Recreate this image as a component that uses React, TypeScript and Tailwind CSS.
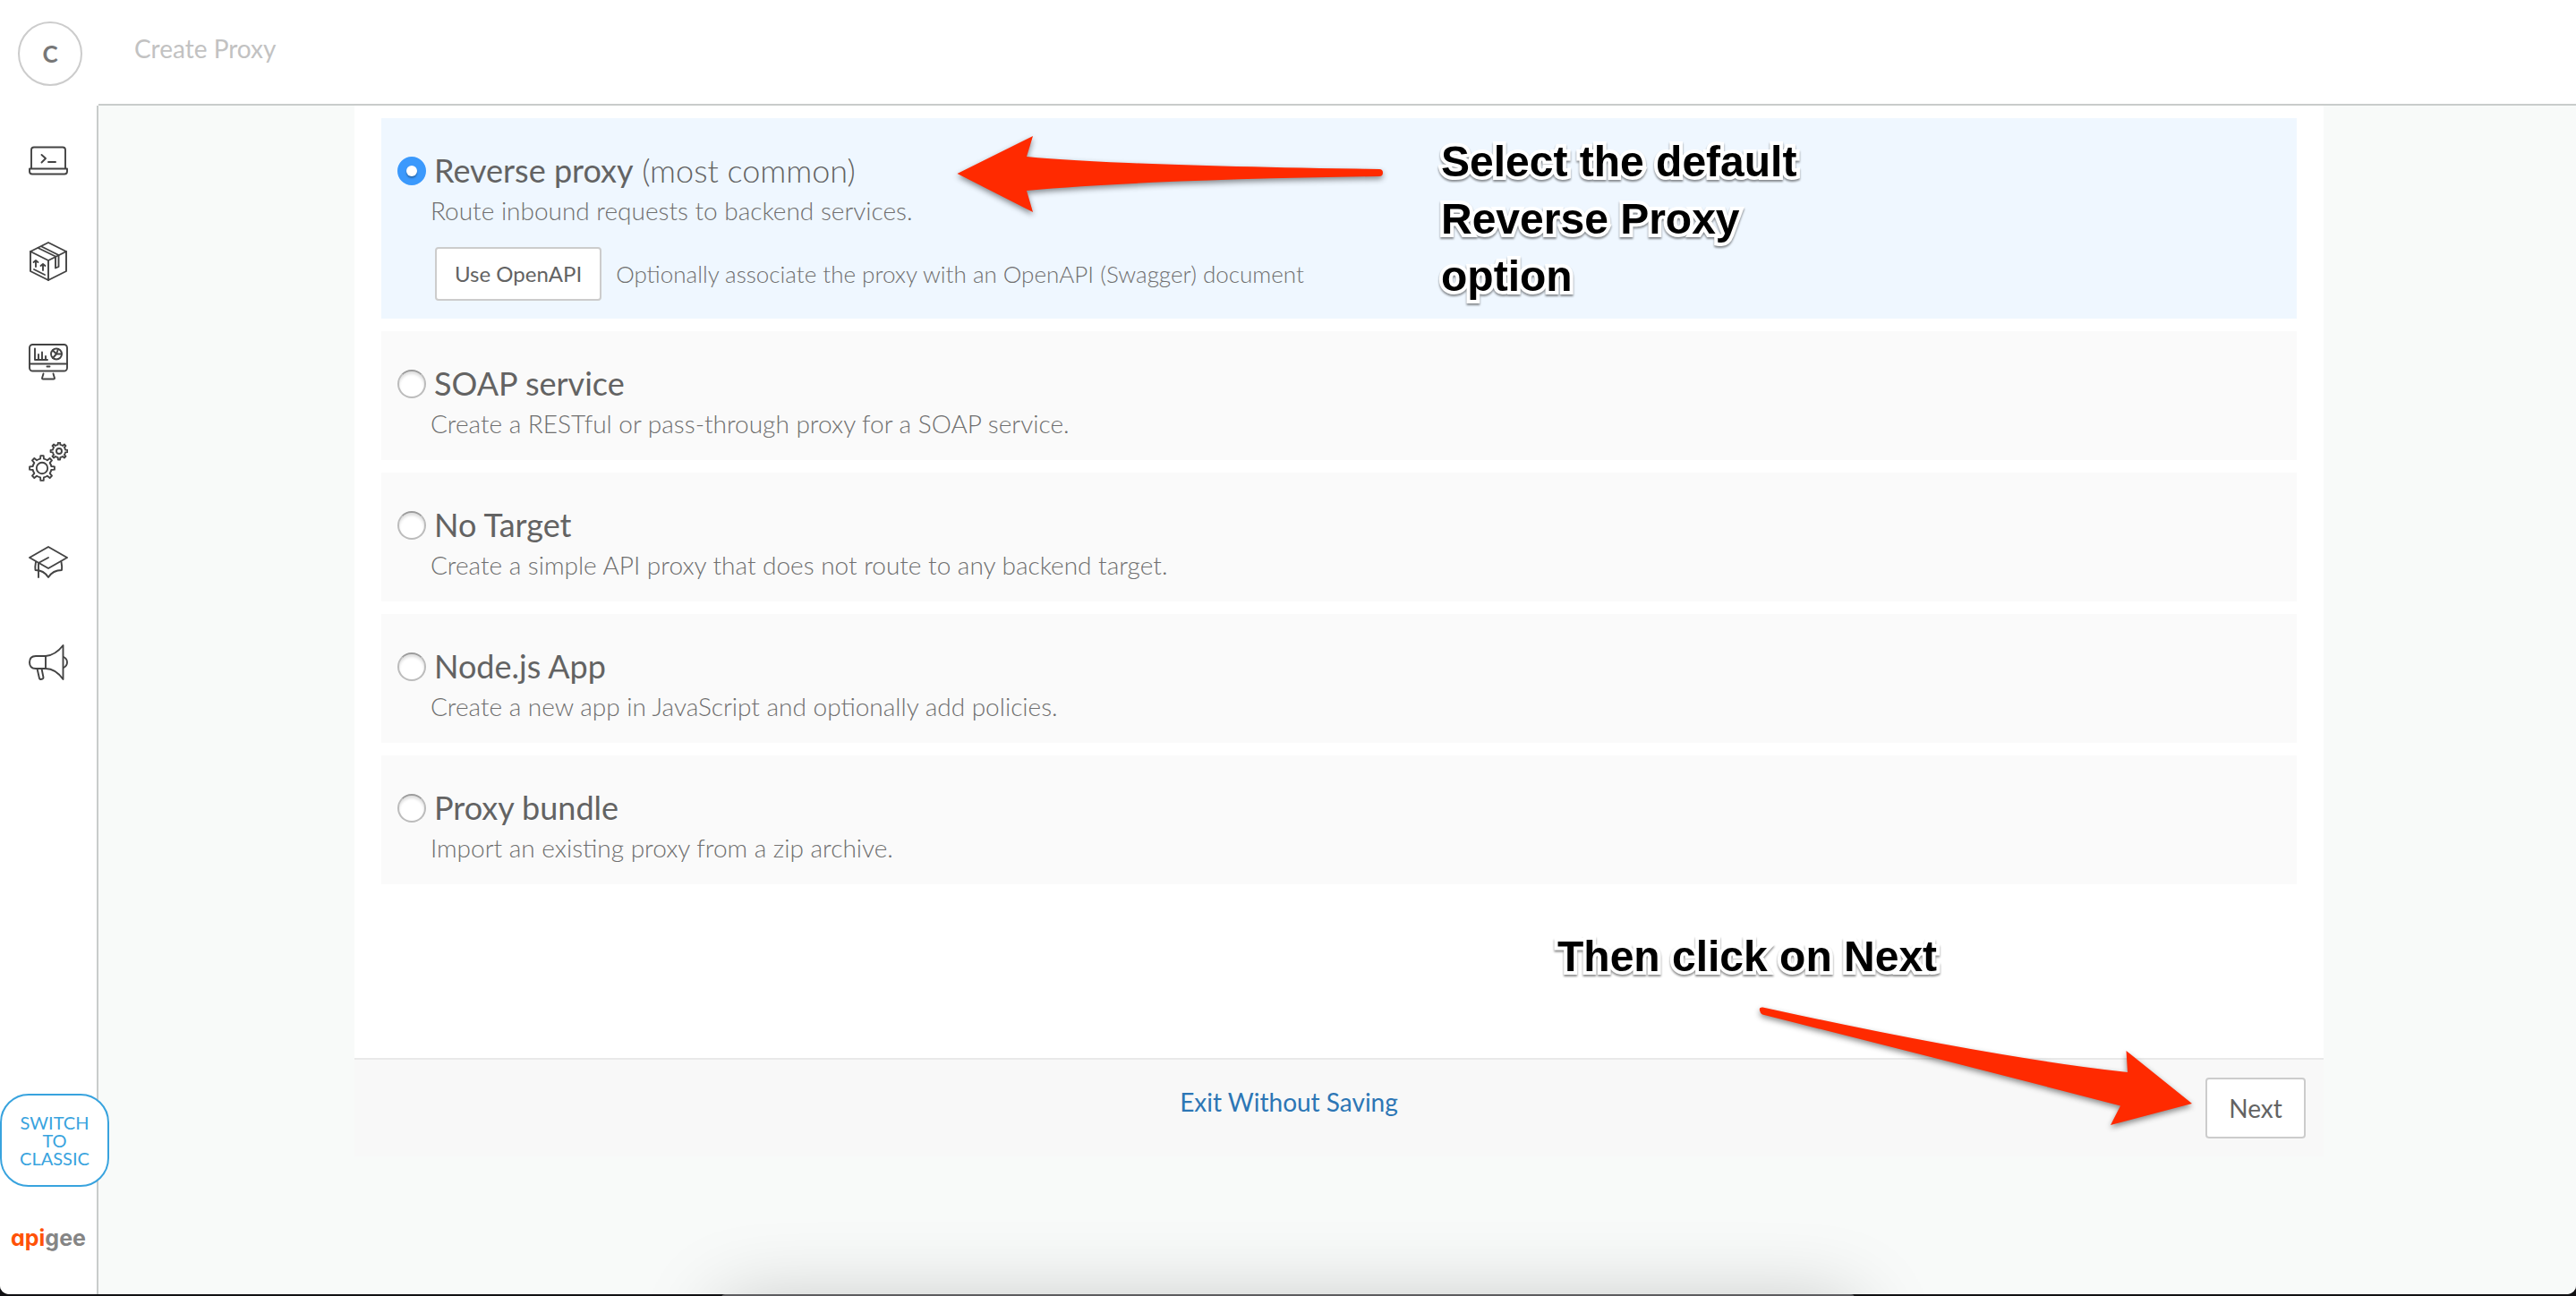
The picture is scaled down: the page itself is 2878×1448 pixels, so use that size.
import React, { useState } from "react";

type ProxyOption = {
  id: string;
  title: string;
  hint?: string;
  description: string;
  openApi?: boolean;
};

const options: ProxyOption[] = [
  {
    id: "reverse",
    title: "Reverse proxy",
    hint: "(most common)",
    description: "Route inbound requests to backend services.",
    openApi: true,
  },
  {
    id: "soap",
    title: "SOAP service",
    description: "Create a RESTful or pass-through proxy for a SOAP service.",
  },
  {
    id: "no-target",
    title: "No Target",
    description: "Create a simple API proxy that does not route to any backend target.",
  },
  {
    id: "node",
    title: "Node.js App",
    description: "Create a new app in JavaScript and optionally add policies.",
  },
  {
    id: "bundle",
    title: "Proxy bundle",
    description: "Import an existing proxy from a zip archive.",
  },
];

function Icon({ children }: { children: React.ReactNode }) {
  return (
    <svg
      viewBox="0 0 44 44"
      className="size-11"
      fill="none"
      stroke="#434343"
      strokeWidth="1.9"
      strokeLinecap="round"
      strokeLinejoin="round"
      aria-hidden="true"
    >
      {children}
    </svg>
  );
}

function gearPath(cx: number, cy: number, outer: number, inner: number, teeth: number) {
  const step = (Math.PI * 2) / teeth;
  const at = (r: number, a: number) =>
    `${(cx + r * Math.sin(a)).toFixed(2)} ${(cy - r * Math.cos(a)).toFixed(2)}`;
  let d = "";
  for (let i = 0; i < teeth; i++) {
    const a = i * step;
    d += `${i === 0 ? "M" : "L"}${at(inner, a - step * 0.24)}L${at(outer, a - step * 0.15)}L${at(
      outer,
      a + step * 0.15
    )}L${at(inner, a + step * 0.24)}A${inner} ${inner} 0 0 1 ${at(inner, a + step * 0.76)}`;
  }
  return d + "Z";
}

const navItems = [
  {
    label: "Develop",
    icon: (
      <Icon>
        <path d="M3 30V9.5Q3 6.5 6 6.5H38Q41 6.5 41 9.5V30" />
        <path d="M1 30.500H43V33.500Q43 36.500 40 36.500H4Q1 36.500 1 33.500Z" />
        <path d="M14.500 15L19 19L14.500 23.500M22 23H30" />
      </Icon>
    ),
  },
  {
    label: "Publish",
    icon: (
      <Icon>
        <path d="M22 1L42 11V33L22 43L2 33V11Z" />
        <path d="M2 11L22 21L42 11M22 21V43" />
        <path d="M10.500 7L30 16.500V29.500L33.500 28V15L14.500 5.500" />
        <path d="M8 28V21M5.500 23L8 21L10.500 23M16 32V25M13.500 27L16 25L18.500 27M6 31L18 37" />
      </Icon>
    ),
  },
  {
    label: "Analyze",
    icon: (
      <Icon>
        <rect x="1" y="3" width="42" height="29.500" rx="3.500" />
        <path d="M1 24.500H43M20.500 27.500H23.500" />
        <path d="M7 7.500V20H21M11 20V14M15 20V11.500M19 20V16" />
        <circle cx="31" cy="13.500" r="6" />
        <path d="M31 13.500L33 8M31 13.500H37M31 13.500L27 18M31 13.500L27 9.500" />
        <path d="M16.500 35.500L15 40.500Q15 41.500 16 41.500H28Q29 41.500 29 40.500L27.500 35.500" />
      </Icon>
    ),
  },
  {
    label: "Admin",
    icon: (
      <Icon>
        <path d={gearPath(15, 29, 14, 10.5, 8)} />
        <circle cx="15" cy="29" r="6.200" />
        <path d={gearPath(34, 10, 9.5, 7.2, 8)} />
        <circle cx="34" cy="10" r="3" />
      </Icon>
    ),
  },
  {
    label: "Learn",
    icon: (
      <Icon>
        <path d="M22 5L43 17L22 29L1 17Z" />
        <path d="M22 17L11 23V39" />
        <path d="M8 22Q7 27 7.500 31Q17 31 22 39Q27 31 37 31Q37.500 27 36.500 22" />
      </Icon>
    ),
  },
  {
    label: "Announcements",
    icon: (
      <Icon>
        <path d="M19 15H8Q1 15 1 22Q1 29 8 29H19Z" />
        <path d="M19 15Q30 14 38.500 3V41Q30 29 19 29" />
        <path d="M39 16Q43 18 43 22Q43 26 39 28" />
        <path d="M9.500 29L12 40Q12.500 41 13.500 41L15.500 40.500Q16.500 40 16.500 39L14.500 29" />
      </Icon>
    ),
  },
];

function Sidebar() {
  return (
    <aside className="flex w-[110px] shrink-0 flex-col bg-white">
      <div className="flex h-[118px] shrink-0 items-start pt-6 pl-5">
        <button
          aria-label="Account"
          className="flex size-18 items-center justify-center rounded-full border-2 border-[#cccccc] text-[26px] font-bold text-[#777777]"
        >
          C
        </button>
      </div>
      <div className="flex grow flex-col border-r-2 border-[#c9cccb]">
        <nav className="flex flex-col items-center gap-17 pt-10">
          {navItems.map((item) => (
            <a key={item.label} href="#" aria-label={item.label}>
              {item.icon}
            </a>
          ))}
        </nav>
        <button className="relative z-10 mt-auto h-26 w-[122px] rounded-4xl border-2 border-[#38a3de] bg-white px-4 text-center text-xl leading-5 text-[#38a3de]">
          SWITCH TO CLASSIC
        </button>
        <a
          href="#"
          className="mt-9 mb-10 flex h-11 items-center justify-center font-[Inter,sans-serif] text-[25px] font-bold [font-feature-settings:'cv11']"
        >
          <span className="text-[#ff5208]">api</span>
          <span className="text-[#858585]">gee</span>
        </a>
      </div>
    </aside>
  );
}

function OptionCard({
  option,
  checked,
  onSelect,
}: {
  option: ProxyOption;
  checked: boolean;
  onSelect: () => void;
}) {
  return (
    <div
      className={`flex items-start gap-[5px] px-[18px] pt-9 ${option.openApi ? "pb-5" : "pb-[18px]"} ${
        checked ? "bg-[#eff7ff]" : "bg-[#fafafa]"
      }`}
    >
      <input
        type="radio"
        name="proxy-type"
        id={option.id}
        checked={checked}
        onChange={onSelect}
        className="mt-[7px] flex size-8 shrink-0 appearance-none items-center justify-center rounded-full border-2 border-[#bcbcbc] border-t-[#9c9c9c] bg-white shadow-[inset_0_3px_3px_rgba(0,0,0,0.12)] checked:border-[#3b99fc] checked:bg-[#3b99fc] checked:shadow-none checked:before:size-3 checked:before:rounded-full checked:before:bg-white checked:before:shadow-[0_2px_2px_rgba(0,0,0,0.3)] checked:before:content-['']"
      />
      <div>
        <label htmlFor={option.id} className="block pl-1 text-4xl leading-11 text-[#636363]">
          {option.title}
          {option.hint && <span className="font-light"> {option.hint}</span>}
        </label>
        <p className="text-[28px] leading-[46px] font-light text-[#6f6f6f]">{option.description}</p>
        {option.openApi && (
          <div className="mt-[18px] flex items-center gap-4 pl-[5px]">
            <button className="h-15 rounded-sm border-2 border-[#cccccc] bg-white px-5 text-2xl text-[#636363]">
              Use OpenAPI
            </button>
            <span className="text-[26px] font-light text-[#6f6f6f]">
              Optionally associate the proxy with an OpenAPI (Swagger) document
            </span>
          </div>
        )}
      </div>
    </div>
  );
}

const noteClass =
  "absolute font-['Liberation_Sans',Arial,sans-serif] text-5xl leading-16 font-bold text-black [-webkit-text-stroke:8px_white] [paint-order:stroke_fill] drop-shadow-[0_2px_1px_rgba(0,0,0,0.45)]";

export default function App() {
  const [selected, setSelected] = useState("reverse");

  return (
    <div className="relative flex h-screen flex-col overflow-hidden bg-[#111113] pb-0.5 font-[Lato,sans-serif]">
      <div className="flex min-h-0 grow overflow-hidden rounded-b-[10px] bg-white">
        <Sidebar />
        <div className="flex grow flex-col">
          <header className="h-[118px] shrink-0 border-b-2 border-[#c9cccb] bg-white pt-8 pl-10">
            <h1 className="text-[28px] leading-11 text-[#c2c2c2]">Create Proxy</h1>
          </header>
          <main className="grow bg-[#f8faf9] pl-1">
            <form className="relative mx-auto max-w-[2200px]" onSubmit={(e) => e.preventDefault()}>
              <div className="flex flex-col gap-3.5 bg-white px-[30px] pt-3.5 pb-[194px]">
                {options.map((option) => (
                  <OptionCard
                    key={option.id}
                    option={option}
                    checked={selected === option.id}
                    onSelect={() => setSelected(option.id)}
                  />
                ))}
              </div>
              <div className="flex items-start border-t-2 border-[#e9e9e9] bg-[#f8f8f8] p-5">
                <div className="grow text-center text-[28px] leading-[54px]">
                  <a href="#" className="text-[#2c76b5]">
                    Exit Without Saving
                  </a>
                </div>
                <button
                  type="submit"
                  className="h-17 w-28 rounded-sm border-2 border-[#cccccc] bg-white text-[28px] text-[#636363]"
                >
                  Next
                </button>
              </div>

              <p className={`${noteClass} top-[31px] left-[1214px] w-[440px]`}>
                Select the default Reverse Proxy option
              </p>
              <p className={`${noteClass} top-[919px] left-[1344px]`}>Then click on Next</p>
              <svg
                viewBox="0 0 490 100"
                className="absolute top-[27px] left-[667px] h-[100px] w-[490px] drop-shadow-[0_3px_3px_rgba(0,0,0,0.45)]"
                aria-hidden="true"
              >
                <path
                  fill="#ff2a00"
                  d="M6.500 49L91 7L84 30Q186 40 478 44Q482 44 482 48Q482 52 478 52Q212 56 84 68L91 92Z"
                />
              </svg>
              <svg
                viewBox="0 0 500 150"
                className="absolute top-[997px] left-[1564px] h-[150px] w-[500px] drop-shadow-[0_3px_3px_rgba(0,0,0,0.45)]"
                aria-hidden="true"
              >
                <path
                  fill="#ff2a00"
                  d="M9.500 10.500Q5 10 6 14Q6.500 17 9 18.500Q265 83 409 120.500L398 142L489 118L415.500 59L417 83Q262 66 9.500 10.500Z"
                />
              </svg>
            </form>
          </main>
        </div>
      </div>
      <div className="pointer-events-none absolute inset-x-0 bottom-0 h-40 overflow-hidden">
        <div className="mx-auto mt-[158px] h-40 w-[44%] rounded-t-sm bg-[#5c5c5f] shadow-[0_10px_90px_rgba(0,0,0,0.22)]" />
      </div>
    </div>
  );
}
